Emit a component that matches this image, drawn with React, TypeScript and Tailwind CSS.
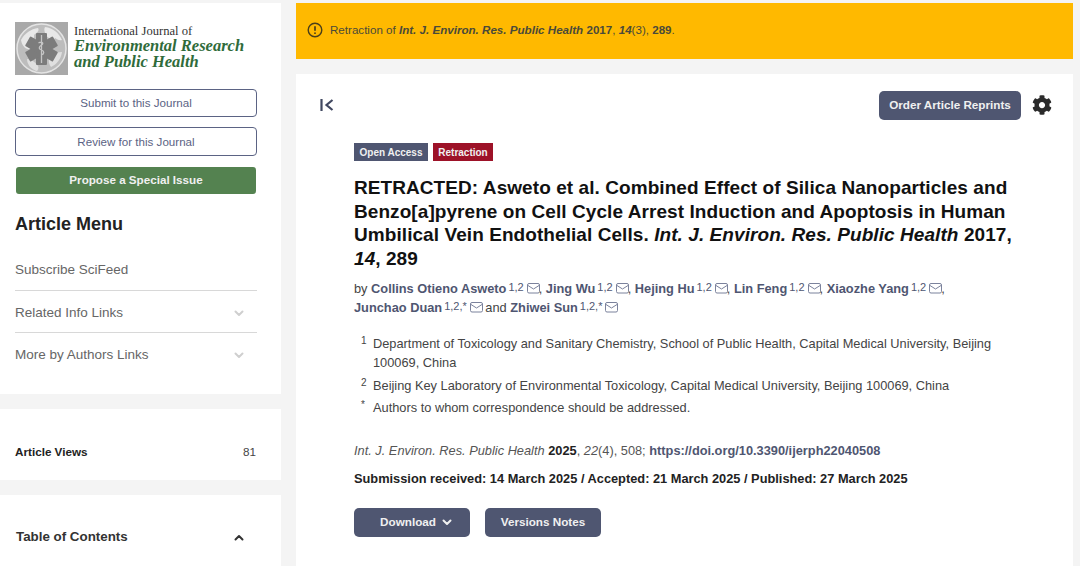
import React from "react";

const Mail = () => (
  <svg width="13" height="11" viewBox="0 0 13 11" fill="none" stroke="#7b829c" strokeWidth="1" className="inline-block ml-[3px] -mr-[1px] mb-[2px]">
    <rect x="0.5" y="0.5" width="12" height="9.5" rx="1.5" />
    <path d="M1 2.5l5.5 3.5 5.5-3.5" />
  </svg>
);

const Author = ({ name, sup }: { name: string; sup: string }) => (
  <>
    <span className="font-bold text-[#4f5671]">{name}</span>
    <sup className="ml-[2px] text-[11px] text-[#4f5671] font-normal">{sup}</sup>
    <Mail />
  </>
);

const Chevron = ({ up, color }: { up?: boolean; color: string }) => (
  <svg width="10" height="7" viewBox="0 0 10 7" fill="none" stroke={color} strokeWidth="2" strokeLinecap="round" strokeLinejoin="round">
    <path d={up ? "M1.5 5.5L5 2l3.5 3.5" : "M1.5 1.5L5 5l3.5-3.5"} />
  </svg>
);

const Logo = () => (
  <svg width="53" height="53" viewBox="0 0 53 53" className="shrink-0">
    <rect width="53" height="53" fill="#a9a9a9" />
    <circle cx="26.5" cy="26.5" r="24.5" fill="#bdbdbd" stroke="#e4e4e4" strokeWidth="1.5" />
    <path d="M6 18c4-7 10-11 17-12 2 3-2 5-4 7 1 3-2 5-5 5-1 3 2 6 1 9-4 1-8-3-9-9z" fill="#e8e8e8" />
    <path d="M30 5c8 1 14 6 17 13-3 1-5-1-7-2-1 3-5 2-6 0-3-1-6-8-4-11z" fill="#e8e8e8" />
    <path d="M36 32c3-1 7-2 11-2-1 7-5 12-11 15-3-4-3-9 0-13z" fill="#e0e0e0" />
    <path d="M12 37c4 0 8 3 11 7 1 2 0 4-1 5-5-1-10-6-10-12z" fill="#e0e0e0" />
    <g fill="#7c7c7c">
      <rect x="21" y="11" width="11" height="32" rx="1" />
      <rect x="21" y="11" width="11" height="32" rx="1" transform="rotate(60 26.5 27)" />
      <rect x="21" y="11" width="11" height="32" rx="1" transform="rotate(-60 26.5 27)" />
    </g>
    <path d="M26.5 13v28M23.5 21c3-2 6 0 3 2s-3 4 0 5 3 4 0 5" stroke="#c6c6c6" strokeWidth="1.3" fill="none" />
  </svg>
);

export default function App() {
  return (
    <div className="w-[1080px] h-[566px] overflow-hidden bg-[#f4f4f4] pt-[3px] flex gap-[15px] font-['Liberation_Sans',Arial,sans-serif] text-[#222]">
      <aside className="w-[281px] shrink-0 flex flex-col gap-[15px]">
        <div className="bg-white h-[391px] pl-[15px] pr-[24px] pt-[19px]">
          <div className="flex items-start gap-[6px] h-[53px]">
            <Logo />
            <div className="font-['Liberation_Serif',serif] pt-[3px]">
              <div className="text-[12.6px] leading-[13px] text-[#333]">International Journal of</div>
              <div className="text-[16.5px] leading-[16px] font-bold italic text-[#2f6b3a] whitespace-nowrap">Environmental Research</div>
              <div className="text-[16.5px] leading-[16px] font-bold italic text-[#2f6b3a] whitespace-nowrap">and Public Health</div>
            </div>
          </div>
          <div className="mt-[14px] h-[28px] pb-[1px] border border-[#5b6384] rounded-[4px] flex items-center justify-center text-[11.6px] text-[#5b6384]">Submit to this Journal</div>
          <div className="mt-[10px] h-[29px] border border-[#5b6384] rounded-[4px] flex items-center justify-center text-[11.6px] text-[#5b6384]">Review for this Journal</div>
          <div className="mt-[11px] mx-[1px] h-[27px] pb-[1px] bg-[#548250] rounded-[3px] flex items-center justify-center text-[11.65px] font-bold text-[#f0f0f0]">Propose a Special Issue</div>
          <h2 className="mt-[19px] text-[18px] leading-[22px] font-bold text-[#222]">Article Menu</h2>
          <div className="mt-[26px] h-[30px] border-b border-[#d8d8d8] text-[13.5px] leading-[16px] pt-[1px] text-[#666]">Subscribe SciFeed</div>
          <div className="h-[42px] pt-[3px] border-b border-[#d8d8d8] flex items-center justify-between text-[13.5px] text-[#666]">
            <span>Related Info Links</span>
            <span className="mr-[13px] mt-[1px]"><Chevron color="#cfcfcf" /></span>
          </div>
          <div className="h-[42px] pt-[2px] flex items-center justify-between text-[13.5px] text-[#666]">
            <span>More by Authors Links</span>
            <span className="mr-[13px] mt-[1px]"><Chevron color="#cfcfcf" /></span>
          </div>
        </div>
        <div className="bg-white h-[71px] pl-[15px] pr-[24px] flex items-center justify-between text-[11.7px]">
          <span className="font-bold text-[#222] mt-[14px]">Article Views</span>
          <span className="text-[#444] mr-[1px] mt-[14px]">81</span>
        </div>
        <div className="bg-white flex-1 pl-[16px] pr-[37px] pt-[34px] flex items-start justify-between">
          <span className="text-[13.35px] leading-[16px] font-bold text-[#333]">Table of Contents</span>
          <span className="mt-[5px]"><Chevron up color="#333" /></span>
        </div>
      </aside>

      <main className="w-[777px] shrink-0 flex flex-col gap-[15px]">
        <div className="bg-[#ffb900] h-[56px] pl-[11px] flex items-center gap-[7px] text-[11.6px] text-[#4a4a3a]">
          <svg width="16" height="16" viewBox="0 0 16 16" fill="none" stroke="#4a3f1a" strokeWidth="1.4" className="mb-[3px]">
            <circle cx="8" cy="8" r="6.8" />
            <path d="M8 4.2v4.6" strokeWidth="1.7" />
            <circle cx="8" cy="11.2" r="0.9" fill="#4a3f1a" stroke="none" />
          </svg>
          <span className="mb-[2px]">Retraction of <i className="font-bold">Int. J. Environ. Res. Public Health</i> <b>2017</b>, <b><i>14</i></b>(3), <b>289</b>.</span>
        </div>
        <div className="bg-white flex-1 relative">
          <div className="flex items-center justify-between h-[28px] mt-[17px] pl-[24px] pr-[21px]">
            <svg width="14" height="12" viewBox="0 0 14 12" fill="none" stroke="#414861" strokeWidth="2.2">
              <path d="M1.5 0v12" />
              <path d="M12.5 1L6.5 6l6 5" />
            </svg>
            <div className="flex items-center gap-[11px]">
              <div className="h-[29px] w-[142px] bg-[#4f5671] rounded-[5px] flex items-center justify-center text-[11.7px] font-bold text-[#f0f0f0]">Order Article Reprints</div>
              <svg width="20" height="20" viewBox="0 0 512 512" fill="#2b2b2b">
                <path d="M487.4 315.7l-42.6-24.6c4.3-23.2 4.3-47 0-70.2l42.6-24.6c4.9-2.8 7.1-8.6 5.5-14-11.1-35.6-30-67.8-54.7-94.6-3.8-4.1-10-5.1-14.8-2.3L380.8 110c-17.9-15.4-38.5-27.3-60.8-35.1V25.8c0-5.6-3.9-10.5-9.4-11.7-36.7-8.2-74.3-7.8-109.2 0-5.5 1.2-9.4 6.1-9.4 11.7V75c-22.2 7.9-42.8 19.8-60.8 35.1L88.7 85.5c-4.9-2.8-11-1.9-14.8 2.3-24.7 26.7-43.6 58.9-54.7 94.6-1.7 5.4.6 11.2 5.5 14L67.3 221c-4.3 23.2-4.3 47 0 70.2l-42.6 24.6c-4.9 2.8-7.1 8.6-5.5 14 11.1 35.6 30 67.8 54.7 94.6 3.8 4.1 10 5.1 14.8 2.3l42.6-24.6c17.9 15.4 38.5 27.3 60.8 35.1v49.2c0 5.6 3.9 10.5 9.4 11.7 36.7 8.2 74.3 7.8 109.2 0 5.5-1.2 9.4-6.1 9.4-11.7v-49.2c22.2-7.9 42.8-19.8 60.8-35.1l42.6 24.6c4.9 2.8 11 1.9 14.8-2.3 24.7-26.7 43.6-58.9 54.7-94.6 1.5-5.5-.7-11.3-5.6-14.1zM256 336c-44.1 0-80-35.9-80-80s35.9-80 80-80 80 35.9 80 80-35.9 80-80 80z" />
              </svg>
            </div>
          </div>
          <div className="ml-[58px] w-[670px]">
            <div className="mt-[24px] flex gap-[5px] text-[10px] font-bold text-[#f0f0f0]">
              <span className="h-[18px] w-[74px] bg-[#4f5671] flex items-center justify-center">Open Access</span>
              <span className="h-[18px] w-[60px] bg-[#9d1228] flex items-center justify-center">Retraction</span>
            </div>
            <h1 className="mt-[15px] text-[19px] tracking-[0.07px] leading-[23.5px] font-bold text-[#111]">
              RETRACTED: Asweto et al. Combined Effect of Silica Nanoparticles and Benzo[a]pyrene on Cell Cycle Arrest Induction and Apoptosis in Human Umbilical Vein Endothelial Cells. <i>Int. J. Environ. Res. Public Health</i> 2017, <i>14</i>, 289
            </h1>
            <div className="mt-[9px] text-[12.8px] leading-[19px] text-[#444] [&_sup]:top-[-2px]">
              by <Author name="Collins Otieno Asweto" sup="1,2" />, <Author name="Jing Wu" sup="1,2" />, <Author name="Hejing Hu" sup="1,2" />, <Author name="Lin Feng" sup="1,2" />, <Author name="Xiaozhe Yang" sup="1,2" />,<br />
              <Author name="Junchao Duan" sup="1,2,*" /> and <Author name="Zhiwei Sun" sup="1,2,*" />
            </div>
            <div className="mt-[17px] pl-[7px] text-[12.8px] text-[#444] leading-[19px]">
              <div className="flex"><span className="w-[12px] shrink-0 text-[10px] leading-[14px]">1</span><span>Department of Toxicology and Sanitary Chemistry, School of Public Health, Capital Medical University, Beijing 100069, China</span></div>
              <div className="flex mt-[4px]"><span className="w-[12px] shrink-0 text-[10px] leading-[14px]">2</span><span>Beijing Key Laboratory of Environmental Toxicology, Capital Medical University, Beijing 100069, China</span></div>
              <div className="flex mt-[3px]"><span className="w-[12px] shrink-0 text-[10px] leading-[14px]">*</span><span>Authors to whom correspondence should be addressed.</span></div>
            </div>
            <div className="mt-[25px] text-[12.8px] leading-[18px] text-[#555]">
              <i>Int. J. Environ. Res. Public Health</i> <b className="text-[#222]">2025</b>, <i>22</i>(4), 508; <b className="text-[#4f5671]">https://doi.org/10.3390/ijerph22040508</b>
            </div>
            <div className="mt-[10px] text-[12.8px] leading-[18px] font-bold text-[#222]">
              Submission received: 14 March 2025 / Accepted: 21 March 2025 / Published: 27 March 2025
            </div>
            <div className="mt-[20px] flex gap-[15px]">
              <div className="w-[116px] h-[29px] pb-[1px] bg-[#4f5671] rounded-[5px] flex items-center justify-center gap-[6px] text-[11.7px] font-bold text-[#f0f0f0] pl-[8px]">
                Download <Chevron color="#f0f0f0" />
              </div>
              <div className="w-[116px] h-[29px] pb-[1px] bg-[#4f5671] rounded-[5px] flex items-center justify-center text-[11.7px] font-bold text-[#f0f0f0]">Versions Notes</div>
            </div>
          </div>
        </div>
      </main>
    </div>
  );
}
